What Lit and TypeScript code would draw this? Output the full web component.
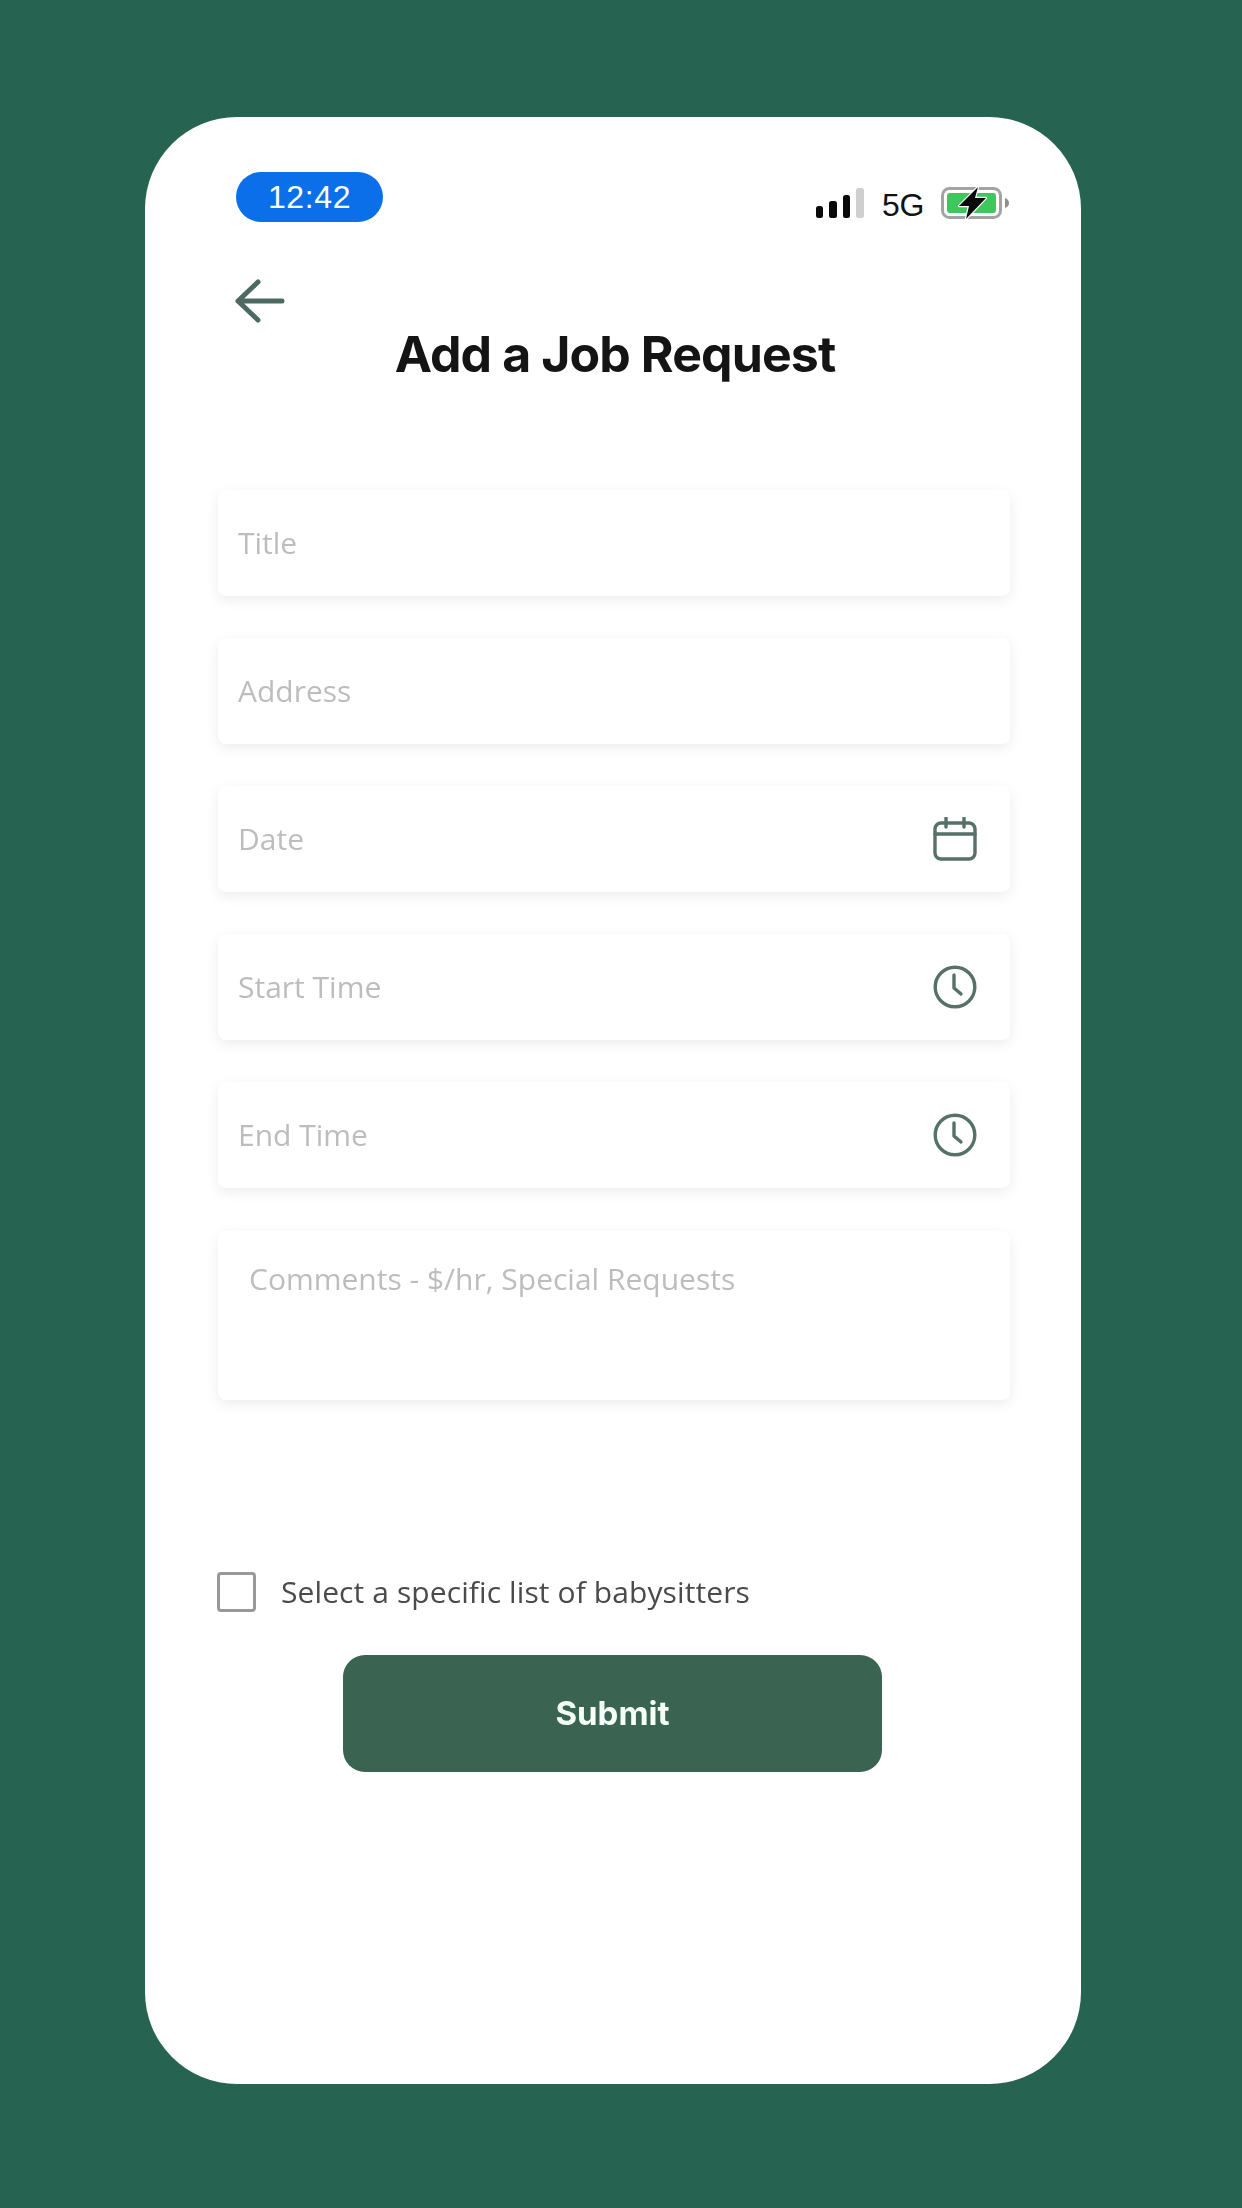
import { LitElement, html, css } from "lit";
import { customElement } from "lit/decorators.js";

const calendar = html`<svg class="icon" viewBox="0 0 44 44" fill="none" stroke="#56716a" stroke-width="3.4">
  <rect x="2" y="6" width="40" height="36" rx="6"></rect>
  <path d="M2 17H42M13 1V10M31 1V10" stroke-linecap="round"></path>
</svg>`;
const clock = html`<svg class="icon" viewBox="0 0 44 44" fill="none" stroke="#56716a" stroke-width="3.4">
  <circle cx="22" cy="22" r="19.8"></circle>
  <path d="M21 10V23L28 29" stroke-linecap="round" stroke-linejoin="round"></path>
</svg>`;

@customElement("app-root")
export class AppRoot extends LitElement {
  static styles = css`
    :host { display: block; box-sizing: border-box; height: 2208px; padding: 117px 161px 124px 145px; background: #266350; }
    * { box-sizing: border-box; }
    .phone { height: 1967px; width: 936px; background: #fff; border-radius: 92px; padding-top: 55px; overflow: hidden; }
    .status { display: flex; justify-content: space-between; align-items: flex-start; padding: 0 71px 0 91px; height: 50px; }
    .pill { width: 147px; height: 50px; border-radius: 25px; background: #0a6fe8; color: #fff; font: 400 32px/50px "Liberation Sans", sans-serif; text-align: center; letter-spacing: 0.6px; }
    .indicators { display: flex; align-items: center; margin-top: 15px; height: 32px; }
    .signal { width: 49px; height: 30px; }
    .net { font: 400 32px/32px "Liberation Sans", sans-serif; color: #111; margin: 3px 17px 0 17px; width: 42px; letter-spacing: -0.4px; }
    .battery { width: 69px; height: 33px; }
    .back { display: block; width: 50px; height: 44px; margin: 57px 0 0 90px; }
    h1 { margin: 1px 0 0; font: 700 50px/60px Inter, sans-serif; color: #141414; text-align: center; letter-spacing: -0.9px; filter: blur(0.5px); padding-left: 4px; }
    form { display: flex; flex-direction: column; gap: 42px; margin: 106px 71px 0 73px; }
    .field { height: 106px; display: flex; align-items: center; justify-content: space-between; padding: 0 33px 0 20px; background: #fff; border-radius: 8px; box-shadow: 0 4px 14px rgba(0,0,0,.075); }
    .ph { font: 400 30px/40px "Open Sans", sans-serif; color: #bdbdbd; filter: blur(0.6px); }
    .icon { width: 44px; height: 44px; display: block; filter: blur(0.4px); }
    .comments { height: 169px; align-items: flex-start; padding: 28px 0 0 31px; }
    .check { display: flex; align-items: center; margin: 172px 0 0 72px; height: 40px; }
    .box { width: 39px; height: 40px; border: 3px solid #999; border-radius: 4px; background: #fff; }
    .label { margin-left: 25px; font: 400 30px/40px "Open Sans", sans-serif; color: #4a4a4a; filter: blur(0.5px); letter-spacing: 0.1px; }
    button { display: block; width: 539px; height: 117px; margin: 43px 0 0 198px; border: 0; border-radius: 22px; background: #3a6351; color: #f4fff9; font: 700 33px/117px Inter, sans-serif; text-align: center; padding: 0; }
    button span { filter: blur(0.5px); display: inline-block; }
  `;

  render() {
    const fields: [string, unknown][] = [
      ["Title", null],
      ["Address", null],
      ["Date", calendar],
      ["Start Time", clock],
      ["End Time", clock],
    ];
    return html`
      <div class="phone">
        <div class="status">
          <div class="pill">12:42</div>
          <div class="indicators">
            <svg class="signal" viewBox="0 0 49 30">
              <rect x="0" y="18" width="7" height="12" rx="2.5" fill="#0a0a0a"></rect>
              <rect x="13" y="13" width="8" height="17" rx="2.5" fill="#0a0a0a"></rect>
              <rect x="27" y="7" width="7" height="23" rx="2.5" fill="#0a0a0a"></rect>
              <rect x="40" y="0" width="8" height="30" rx="2.5" fill="#cfcfcf"></rect>
            </svg>
            <span class="net">5G</span>
            <svg class="battery" viewBox="0 0 69 33">
              <rect x="1.5" y="1.5" width="58" height="29" rx="7" fill="#fff" stroke="#a3a3a3" stroke-width="3"></rect>
              <rect x="6" y="6" width="49" height="20" rx="3" fill="#3ec75c"></rect>
              <path d="M64 11C67 12 68 14 68 16C68 18 67 20 64 21Z" fill="#8e8e8e"></path>
              <path d="M37 0L18 19H28L25 32L45 11H34Z" fill="#0a0a0a" stroke="#fff" stroke-width="2.4" stroke-linejoin="round" paint-order="stroke"></path>
            </svg>
          </div>
        </div>
        <svg class="back" viewBox="0 0 50 44" fill="none" stroke="#4d6a62" stroke-width="5" stroke-linecap="round" stroke-linejoin="round">
          <path d="M3 22H47M23 3L3 22L23 41"></path>
        </svg>
        <h1>Add a Job Request</h1>
        <form>
          ${fields.map(([t, icon]) => html`<div class="field"><span class="ph">${t}</span>${icon}</div>`)}
          <div class="field comments" style="margin-top:1px"><span class="ph">Comments - $/hr, Special Requests</span></div>
        </form>
        <div class="check">
          <div class="box"></div>
          <span class="label">Select a specific list of babysitters</span>
        </div>
        <button type="button"><span>Submit</span></button>
      </div>
    `;
  }
}
